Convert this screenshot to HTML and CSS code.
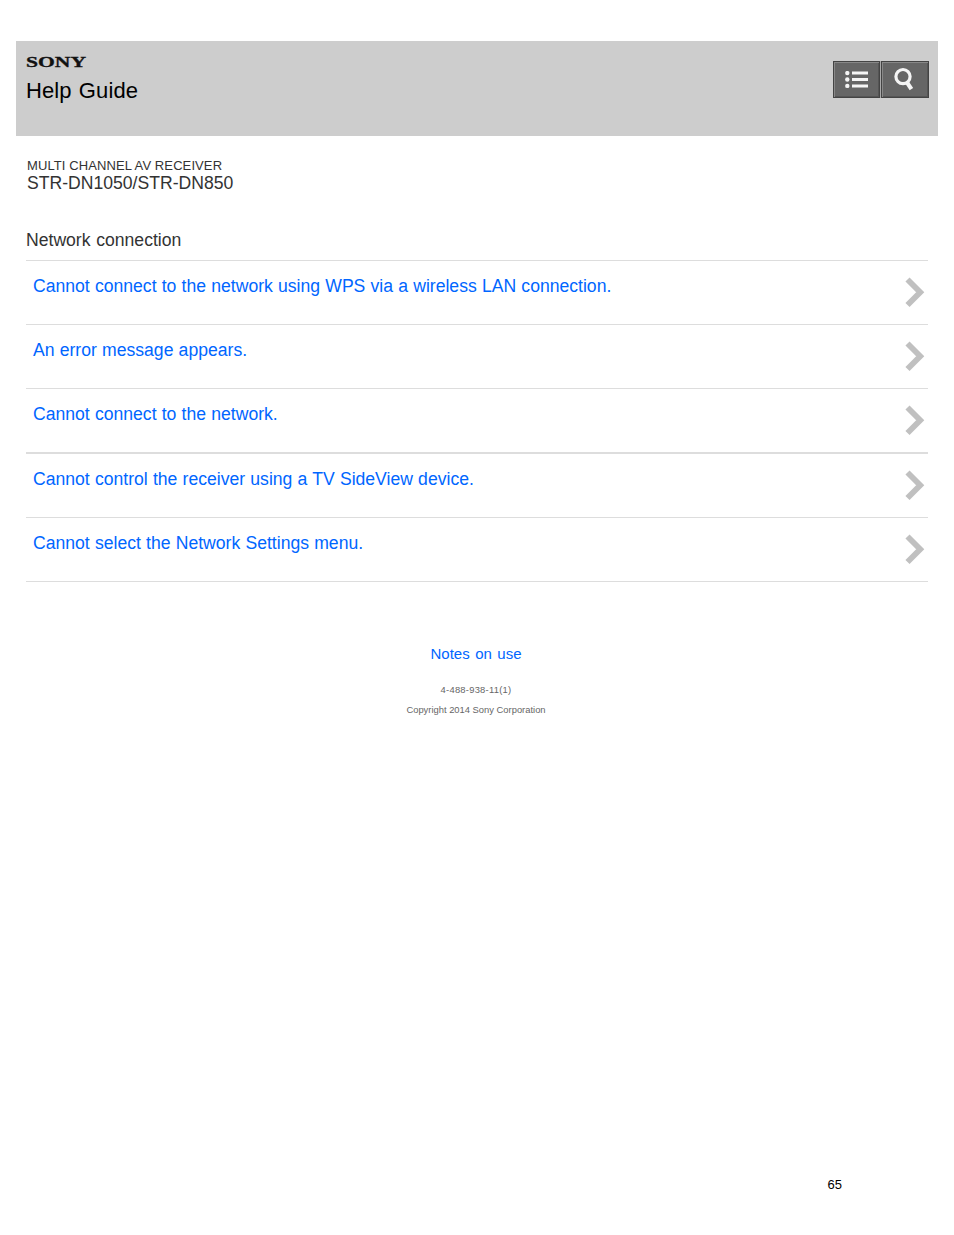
FILE: index.html
```html
<!DOCTYPE html>
<html lang="en">
<head>
  <meta charset="UTF-8">
  <title>Help Guide | Network connection</title>
  <link rel="stylesheet" href="styles.css">
</head>
<body>

<header class="header">
  <div class="brand">
    <svg class="logo" width="66" height="20" viewBox="0 0 66 20">
      <text x="0" y="14" textLength="60" lengthAdjust="spacingAndGlyphs">SONY</text>
    </svg>
    <h1>Help Guide</h1>
  </div>
  <div class="buttons">
    <button class="contents" aria-label="Contents">
      <svg width="23" height="18" viewBox="0 0 23 18">
        <circle cx="2.3" cy="2.1" r="2.2"/>
        <circle cx="2.3" cy="8.5" r="2.2"/>
        <circle cx="2.3" cy="14.9" r="2.2"/>
        <path d="M7 .5h16v3H7zM7 7h16v3H7zM7 13.5h16v3H7z"/>
      </svg>
    </button>
    <button class="search" aria-label="Search">
      <svg width="24" height="27" viewBox="0 0 24 27">
        <circle class="lens" cx="10" cy="10.6" r="7.1"/>
        <path class="handle" d="M13.8 16.2l4.6 7"/>
      </svg>
    </button>
  </div>
</header>

<main>
  <p class="category">MULTI CHANNEL AV RECEIVER</p>
  <p class="model">STR-DN1050/STR-DN850</p>

  <h2>Network connection</h2>
  <ul class="topics">
    <li>
      <a href="#">Cannot connect to the network using WPS via a wireless LAN connection.</a>
      <svg class="arrow" viewBox="0 0 20 32"><path d="M2.5 3.5L15.2 16.2L2.5 29"/></svg>
    </li>
    <li>
      <a href="#">An error message appears.</a>
      <svg class="arrow" viewBox="0 0 20 32"><path d="M2.5 3.5L15.2 16.2L2.5 29"/></svg>
    </li>
    <li class="thick">
      <a href="#">Cannot connect to the network.</a>
      <svg class="arrow" viewBox="0 0 20 32"><path d="M2.5 3.5L15.2 16.2L2.5 29"/></svg>
    </li>
    <li>
      <a href="#">Cannot control the receiver using a TV SideView device.</a>
      <svg class="arrow" viewBox="0 0 20 32"><path d="M2.5 3.5L15.2 16.2L2.5 29"/></svg>
    </li>
    <li>
      <a href="#">Cannot select the Network Settings menu.</a>
      <svg class="arrow" viewBox="0 0 20 32"><path d="M2.5 3.5L15.2 16.2L2.5 29"/></svg>
    </li>
  </ul>
</main>

<footer>
  <a class="notes" href="#">Notes on use</a>
  <p class="number">4-488-938-11(1)</p>
  <p class="copyright">Copyright 2014 Sony Corporation</p>
  <p class="page">65</p>
</footer>

</body>
</html>
```

FILE: styles.css
```css
body {
  margin: 0;
  padding: 41px 16px 0;
  font-family: "Liberation Sans", Arial, sans-serif;
  color: #333;
  background: #fff;
}

h1, h2, p, ul {
  margin: 0;
  padding: 0;
  font-weight: normal;
}

a {
  color: #0066ff;
  text-decoration: none;
}

.header {
  display: flex;
  justify-content: space-between;
  box-sizing: border-box;
  height: 95px;
  padding: 12px 9px 0 10px;
  background: #cdcdcd;
}

.logo {
  display: block;
}

.logo text {
  font-family: "Liberation Serif", "Times New Roman", serif;
  font-size: 14.5px;
  font-weight: bold;
  fill: #111;
  stroke: #111;
  stroke-width: 0.3;
}

h1 {
  margin-top: 5px;
  font-size: 22px;
  line-height: 25px;
  letter-spacing: 0.1px;
  word-spacing: 1px;
  color: #000;
}

.buttons {
  display: flex;
  gap: 1px;
  height: 37px;
  margin-top: 8px;
  background: #aaa;
}

button {
  display: flex;
  align-items: center;
  justify-content: center;
  box-sizing: border-box;
  width: 48px;
  padding: 0;
  border: 1px solid #444;
  background: #666;
  box-shadow: inset 1px 1px 0 #888, inset -1px -1px 0 #555;
}

.contents {
  width: 47px;
}

button svg {
  fill: #f5f5f5;
}

.lens {
  fill: none;
  stroke: #f5f5f5;
  stroke-width: 3.2;
}

.handle {
  stroke: #f5f5f5;
  stroke-width: 4.2;
}

main {
  padding: 22px 10px 0;
}

.category {
  padding-left: 1px;
  font-size: 13px;
  line-height: 16px;
  letter-spacing: 0.1px;
}

.model {
  padding-left: 1px;
  font-size: 17.6px;
  line-height: 18px;
}

h2 {
  margin-top: 38px;
  font-size: 17.6px;
  line-height: 20px;
  word-spacing: 0.8px;
}

.topics {
  margin-top: 10px;
  border-top: 1px solid #ddd;
  list-style: none;
}

.topics li {
  display: flex;
  justify-content: space-between;
  height: 63px;
  padding: 0 3px 0 7px;
  border-bottom: 1px solid #ddd;
}

.topics .thick {
  border-bottom-width: 2px;
}

.topics a {
  margin-top: 15px;
  font-size: 17.6px;
  line-height: 20px;
  word-spacing: 0.3px;
}

.arrow {
  width: 20px;
  height: 32px;
  margin-top: 15px;
  fill: none;
  stroke: #c0c0c0;
  stroke-width: 5.8;
}

footer {
  padding-right: 2px;
  text-align: center;
}

.notes {
  display: block;
  margin-top: 63px;
  font-size: 15px;
  line-height: 18px;
  word-spacing: 1.3px;
}

.number, .copyright {
  font-size: 9.4px;
  line-height: 12px;
  color: #666;
}

.number {
  margin-top: 21px;
  letter-spacing: 0.25px;
}

.copyright {
  margin-top: 8px;
}

.page {
  margin-top: 461px;
  padding-right: 94px;
  font-size: 13px;
  line-height: 16px;
  text-align: right;
  color: #000;
}
```
